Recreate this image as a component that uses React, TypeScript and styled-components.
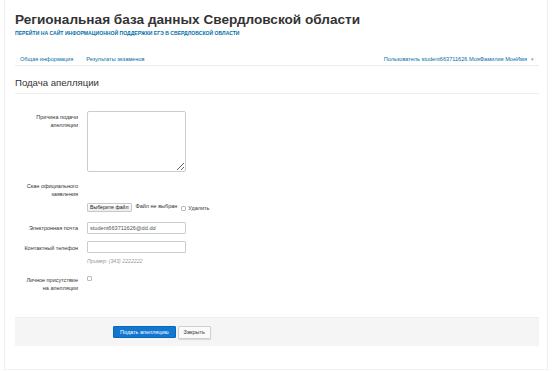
import styled, { createGlobalStyle } from "styled-components";

const GlobalStyle = createGlobalStyle`
  html, body {
    margin: 0;
    padding: 0;
    background: #ffffff;
  }
  body {
    font-family: "Liberation Sans", Arial, sans-serif;
    color: #333333;
  }
`;

const Card = styled.div`
  box-sizing: border-box;
  width: 544px;
  height: 370px;
  margin-left: 4px;
  padding: 0 8px 0 10px;
  border-left: 1px solid #eeeeee;
  border-right: 1px solid #eeeeee;
  border-bottom: 1px solid #f2f2f2;
`;

const Header = styled.header`
  padding-top: 11px;
`;

const Title = styled.h1`
  margin: 0;
  font-size: 13.6px;
  line-height: 18px;
  font-weight: 700;
  color: #333333;
`;

const SiteLink = styled.a`
  display: block;
  margin-top: 1px;
  font-size: 5.1px;
  line-height: 6px;
  font-weight: 700;
  text-transform: uppercase;
  color: #0070a8;
  text-decoration: none;
`;

const Nav = styled.nav`
  display: flex;
  align-items: center;
  justify-content: space-between;
  margin-top: 16px;
  height: 13px;
  padding: 0 5px;
  border-bottom: 1px solid #ececec;
`;

const NavGroup = styled.div`
  display: flex;
  gap: 13px;
`;

const NavLink = styled.a`
  font-size: 5.6px;
  line-height: 8px;
  color: #0070a8;
  text-decoration: none;
`;

const Caret = styled.span`
  margin-left: 4px;
  color: #999999;
  font-size: 5px;
`;

const Section = styled.section`
  margin-top: 11px;
`;

const Heading = styled.h2`
  margin: 0;
  padding-bottom: 4px;
  font-size: 9.6px;
  line-height: 12px;
  font-weight: 400;
  color: #333333;
  border-bottom: 1px solid #eeeeee;
`;

const Form = styled.form`
  padding-top: 17px;
`;

const Row = styled.div<{ $mt?: number }>`
  display: grid;
  grid-template-columns: 63px 1fr;
  column-gap: 9px;
  margin-top: ${(p) => p.$mt ?? 0}px;
`;

const Label = styled.label<{ $pt?: number }>`
  padding-top: ${(p) => p.$pt ?? 0}px;
  text-align: right;
  font-size: 5.5px;
  line-height: 8px;
  color: #333333;
`;

const Controls = styled.div<{ $pt?: number }>`
  padding-top: ${(p) => p.$pt ?? 0}px;
  display: flex;
  flex-direction: column;
  align-items: flex-start;
`;

const TextArea = styled.textarea`
  box-sizing: border-box;
  width: 99px;
  height: 61px;
  margin: 0;
  border: 1px solid #cccccc;
  border-radius: 2px;
  resize: both;
  background: #ffffff;
`;

const Input = styled.input`
  box-sizing: border-box;
  width: 99px;
  height: 12px;
  margin: 0;
  padding: 0 2px;
  border: 1px solid #cccccc;
  border-radius: 1px;
  font-family: "Liberation Sans", Arial, sans-serif;
  font-size: 5.6px;
  color: #555555;
  outline: none;
`;

const FileLine = styled.div`
  display: flex;
  align-items: flex-start;
`;

const FileButton = styled.button`
  box-sizing: border-box;
  height: 9px;
  padding: 0 2px;
  margin-top: 0;
  border: 1px solid #c8c8c8;
  border-radius: 1px;
  background: linear-gradient(#ffffff, #ececec);
  font-family: "Liberation Sans", Arial, sans-serif;
  font-size: 5.2px;
  line-height: 7px;
  color: #222222;
`;

const FileName = styled.span`
  margin: -1px 0 0 4px;
  font-size: 5.5px;
  line-height: 8px;
  color: #333333;
`;

const CheckLabel = styled.label`
  display: flex;
  align-items: center;
  gap: 2px;
  margin: 1px 0 0 4px;
  font-size: 5.5px;
  line-height: 8px;
`;

const Box = styled.span`
  display: inline-block;
  box-sizing: border-box;
  width: 5px;
  height: 5px;
  border: 1px solid #bbbbbb;
  border-radius: 1px;
  background: #ffffff;
`;

const Help = styled.div`
  margin-top: 5px;
  font-size: 5.2px;
  line-height: 7px;
  font-style: italic;
  color: #999999;
`;

const Footer = styled.div`
  display: flex;
  align-items: center;
  gap: 2px;
  height: 28px;
  margin-top: 25px;
  padding-left: 98px;
  background: #f5f5f5;
  border-top: 1px solid #f0f0f0;
`;

const Button = styled.button<{ $primary?: boolean }>`
  box-sizing: border-box;
  height: ${(p) => (p.$primary ? 12 : 13)}px;
  padding: 0 ${(p) => (p.$primary ? 6 : 5)}px;
  border-radius: 1px;
  border: 1px solid ${(p) => (p.$primary ? "#0a66b8" : "#d0d0d0")};
  background: ${(p) => (p.$primary ? "#1177d1" : "#fafafa")};
  box-shadow: ${(p) => (p.$primary ? "none" : "0 1px 1px rgba(0,0,0,0.12)")};
  color: ${(p) => (p.$primary ? "#ffffff" : "#333333")};
  font-family: "Liberation Sans", Arial, sans-serif;
  font-size: 5.5px;
  line-height: 8px;
`;

export default function App() {
  return (
    <>
      <GlobalStyle />
      <Card>
        <Header>
          <Title>Региональная база данных Свердловской области</Title>
          <SiteLink href="#">
            Перейти на сайт информационной поддержки ЕГЭ в Свердловской области
          </SiteLink>
        </Header>
        <Nav>
          <NavGroup>
            <NavLink href="#">Общая информация</NavLink>
            <NavLink href="#">Результаты экзаменов</NavLink>
          </NavGroup>
          <NavLink href="#">
            Пользователь student663711626 МояФамилия МоеИмя
            <Caret>▾</Caret>
          </NavLink>
        </Nav>
        <Section>
          <Heading>Подача апелляции</Heading>
          <Form>
            <Row>
              <Label $pt={2}>
                Причина подачи
                <br />
                апелляции
              </Label>
              <Controls>
                <TextArea />
              </Controls>
            </Row>
            <Row $mt={10}>
              <Label>
                Скан официального
                <br />
                заявления
              </Label>
              <Controls $pt={21}>
                <FileLine>
                  <FileButton type="button">Выберите файл</FileButton>
                  <FileName>Файл не выбран</FileName>
                  <CheckLabel>
                    <Box />
                    Удалить
                  </CheckLabel>
                </FileLine>
              </Controls>
            </Row>
            <Row $mt={10}>
              <Label $pt={2}>Электронная почта</Label>
              <Controls>
                <Input defaultValue="student663711626@dd.dd" />
              </Controls>
            </Row>
            <Row $mt={7}>
              <Label $pt={3}>Контактный телефон</Label>
              <Controls>
                <Input />
                <Help>Пример: (343) 2222222</Help>
              </Controls>
            </Row>
            <Row $mt={11}>
              <Label>
                Личное присутствие
                <br />
                на апелляции
              </Label>
              <Controls $pt={0}>
                <Box />
              </Controls>
            </Row>
          </Form>
        </Section>
        <Footer>
          <Button $primary type="button">
            Подать апелляцию
          </Button>
          <Button type="button">Закрыть</Button>
        </Footer>
      </Card>
    </>
  );
}
